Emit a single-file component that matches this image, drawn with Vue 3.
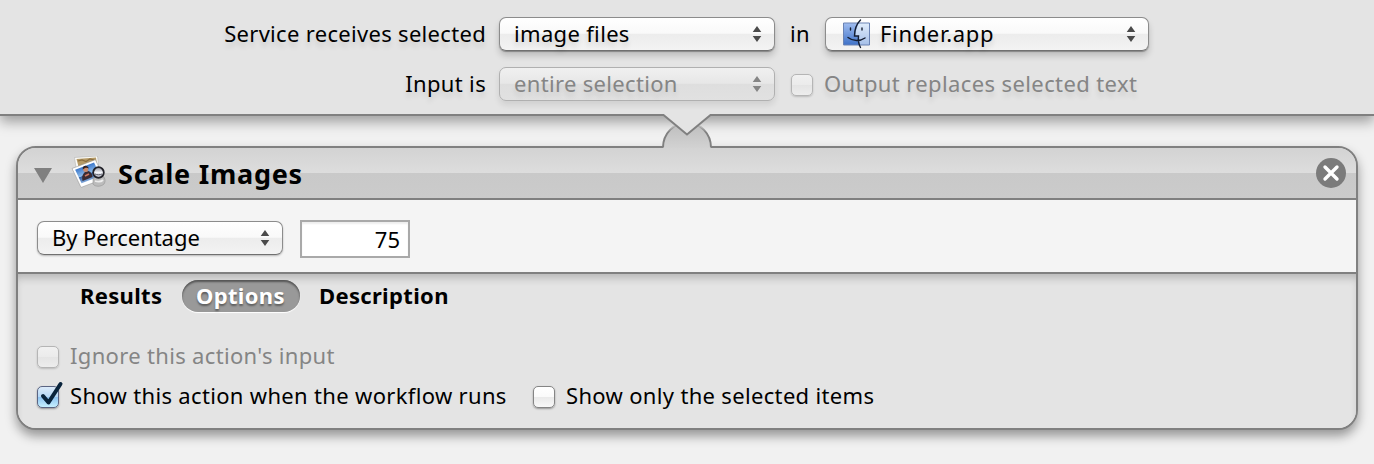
<script setup>
import { ref } from 'vue'

const tabs = ['Results', 'Options', 'Description']
const activeTab = ref('Options')
</script>

<template>
  <main class="workflow">
    <section class="service">
      <div class="row">
        <span class="label t-service">Service receives selected</span>
        <button class="popup wide shaded">
          <span class="t-image">image files</span>
          <svg class="arrows" viewBox="0 0 10 16"><path d="M5 0 9.3 6H.7zM.7 10h8.6L5 16z" /></svg>
        </button>
        <span class="in">in</span>
        <button class="popup finder shaded">
          <svg class="face" viewBox="0 0 28 30">
            <defs>
              <linearGradient id="faceLeft" x1="0" y1="0" x2="0" y2="1">
                <stop offset="0" stop-color="#a0bdf0" /><stop offset="1" stop-color="#3f72c8" />
              </linearGradient>
              <linearGradient id="faceRight" x1="0" y1="0" x2="0" y2="1">
                <stop offset="0" stop-color="#e0edfc" /><stop offset="1" stop-color="#a5bfe8" />
              </linearGradient>
            </defs>
            <rect x=".5" y="4" width="26" height="22" fill="url(#faceRight)" />
            <path d="M.5 4h15.500c-2 4-3.500 8-4 13h4l.5 9H.5z" fill="url(#faceLeft)" />
            <path d="M.5 4h26v22H.5z" fill="none" stroke="#6a83b4" stroke-width="1" />
            <path d="M17.500 1C13.500 5 11.500 11 11.500 17h4c-.5 4 0 8 2 11.500M5 18.500c5 4 12 4 17 .5M7.500 9v2M19 9v2" fill="none" stroke="#141d30" stroke-width="1.400" stroke-linecap="round" />
          </svg>
          <span class="t-finder">Finder.app</span>
          <svg class="arrows" viewBox="0 0 10 16"><path d="M5 0 9.3 6H.7zM.7 10h8.6L5 16z" /></svg>
        </button>
      </div>
      <div class="row second">
        <span class="label t-input">Input is</span>
        <button class="popup wide dim">
          <span class="t-entire">entire selection</span>
          <svg class="arrows" viewBox="0 0 10 16"><path d="M5 0 9.3 6H.7zM.7 10h8.6L5 16z" /></svg>
        </button>
        <i class="box off output-box"></i>
        <span class="muted t-output">Output replaces selected text</span>
      </div>
    </section>

    <div class="connector">
      <svg viewBox="0 0 60 36">
        <defs>
          <linearGradient id="socket" x1="0" y1="0" x2="0" y2="1">
            <stop offset="0" stop-color="#bdbdbd" /><stop offset="1" stop-color="#d2d2d2" />
          </linearGradient>
          <linearGradient id="rim" gradientUnits="userSpaceOnUse" x1="0" y1="9" x2="0" y2="34">
            <stop offset="0.05" stop-color="#808080" stop-opacity="0" /><stop offset=".4" stop-color="#808080" />
          </linearGradient>
        </defs>
        <path d="M6 35v-1a24 24 0 0 1 48 0v1z" fill="url(#socket)" />
        <path d="M6 34.500a24 25 0 0 1 48 0" fill="none" stroke="url(#rim)" stroke-width="2" />
        <path d="M6 0v2l24 20L54 2V0z" fill="#e4e4e4" />
        <path d="M5 2h1.500L30 21.500 53.500 2H55" fill="none" stroke="#808080" stroke-width="2" />
      </svg>
    </div>

    <section class="action">
      <header class="head">
        <svg class="disclosure" viewBox="0 0 18 16"><path d="M0 0h18L9 15z" /></svg>
        <svg class="photos" viewBox="0 0 36 34">
          <defs>
            <linearGradient id="sky" x1="0" y1="0" x2="0" y2="1">
              <stop offset="0" stop-color="#3c78cb" /><stop offset=".55" stop-color="#8dbbea" /><stop offset=".6" stop-color="#315fa3" /><stop offset="1" stop-color="#7ea6da" />
            </linearGradient>
            <linearGradient id="lens" x1="0" y1="0" x2="0" y2="1">
              <stop offset="0" stop-color="#8a8c96" /><stop offset=".5" stop-color="#f4f5fa" /><stop offset="1" stop-color="#a3a5b2" />
            </linearGradient>
          </defs>
          <path d="M3.500 1.500 26.500 0l2 17-22 4z" fill="#fbfbf8" stroke="#aaa" stroke-width=".5" />
          <path d="m5.500 3 19.500-1.500 1 8-18 3z" fill="#b59a66" />
          <path d="m7 5 4-1 4 1.500 4-2.500 4 1" fill="none" stroke="#8a6e40" stroke-width="1.200" />
          <g transform="matrix(.9 -.34 .41 .86 1 12.500)">
            <path d="M0 0h26v22H0z" fill="#fff" stroke="#8d8d8d" stroke-width=".5" />
            <path d="M2.400 2.400h21v15.600h-21z" fill="url(#sky)" />
          </g>
          <path d="M11.500 25c-1-4 0-7 2.500-9l3.500-1c3 1 4 4 4 6z" fill="#3a2c33" />
          <circle cx="14.700" cy="13.500" r="2.500" fill="#c98a6c" />
          <path d="M11.800 13.500c-1-4.500 5-5 6-1-2-1.200-4-.7-6 1z" fill="#2f1f20" />
          <path d="m14 20 4-2" stroke="#cf7862" stroke-width="1.800" />
          <path d="m22 22 9-2c3 1 4 5 2 8-3 3-9 3-11 0z" fill="#bcbcbc" stroke="#8a8a8a" stroke-width=".5" />
          <path d="M24 25c3 1 6 1 8-1" fill="none" stroke="#ededed" stroke-width="1.800" />
          <circle cx="27.500" cy="16.500" r="5.300" fill="url(#lens)" stroke="#222229" stroke-width="1.800" />
          <path d="M24 18c2 1 5 1 7 0" fill="none" stroke="#60626e" stroke-width="1" />
        </svg>
        <h1>Scale Images</h1>
        <svg class="close" viewBox="0 0 30 30">
          <circle cx="15" cy="15" r="15" fill="#7b7b7b" />
          <path d="m9 9 12 12M21 9 9 21" stroke="#fff" stroke-width="3.400" stroke-linecap="round" />
        </svg>
      </header>

      <div class="settings">
        <button class="popup method">
          <span class="t-method">By Percentage</span>
          <svg class="arrows" viewBox="0 0 10 16"><path d="M5 0 9.3 6H.7zM.7 10h8.6L5 16z" /></svg>
        </button>
        <div class="number">75</div>
      </div>

      <div class="details">
        <nav class="tabs">
          <span v-for="tab in tabs" :key="tab" class="tab" :class="[tab.toLowerCase(), { active: tab === activeTab }]" @click="activeTab = tab">{{ tab }}</span>
        </nav>
        <div class="check ignore">
          <i class="box off"></i><span class="muted t-ignore">Ignore this action's input</span>
        </div>
        <div class="check show">
          <i class="box on">
            <svg viewBox="0 0 28 30"><path d="m6 16 5.500 6.500L23.500 4" fill="none" stroke="#09243c" stroke-width="4" stroke-linecap="round" stroke-linejoin="round" /></svg>
          </i>
          <span class="t-show">Show this action when the workflow runs</span>
          <i class="box"></i>
          <span class="t-only">Show only the selected items</span>
        </div>
      </div>
    </section>
  </main>
</template>

<style>
body { margin: 0; background: #f1f1f1; }
</style>

<style scoped>
* { box-sizing: border-box; }
.workflow {
  height: 464px;
  overflow: hidden;
  background: #f1f1f1;
  color: #000;
  font: 22px/32px "Noto Sans", "Open Sans", sans-serif;
  letter-spacing: .33px;
  white-space: nowrap;
}
.service {
  height: 116px;
  padding-top: 17px;
  background: #e4e4e4;
  border-bottom: 2px solid #808080;
  box-shadow: 0 6px 12px rgba(0, 0, 0, .34);
}
.row { display: flex; height: 34px; }
.second { margin-top: 16px; }
.label { width: 486px; margin-right: 13px; text-align: right; }
.row > span { text-shadow: 0 5px 5px rgba(0, 0, 0, .1); }
.popup {
  display: flex;
  align-items: center;
  height: 34px;
  padding: 0 12px 0 14px;
  border: 1px solid #8c8c8c;
  border-bottom-color: #707070;
  border-radius: 7px;
  color: #000;
  background: linear-gradient(#fff 0, #f9f9f9 48%, #ececec 50%, #f3f3f3 100%);
  box-shadow: 0 1px 2px rgba(0, 0, 0, .25);
  font: inherit;
  letter-spacing: inherit;
  text-align: left;
}
.shaded { box-shadow: 0 1px 1px rgba(0, 0, 0, .3), 0 5px 6px rgba(0, 0, 0, .17); text-shadow: 0 5px 5px rgba(0, 0, 0, .13); }
.popup span { flex: 1; height: 32px; line-height: 30px; }
.wide { width: 276px; }
.arrows { width: 10px; height: 16px; fill: #4a4a4a; }
.in { width: 50px; padding-left: 15px; }
.finder { width: 324px; padding-left: 17px; }
.face { width: 28px; height: 30px; margin-right: 9px; }
.dim {
  color: #858585;
  border-color: #b0b0b0;
  background: linear-gradient(#f0f0f0, #e7e7e7 48%, #dedede 50%, #e1e1e1);
  box-shadow: 0 4px 6px rgba(0, 0, 0, .09);
  text-shadow: 0 5px 5px rgba(0, 0, 0, .09);
}
.dim .arrows { fill: #858585; }
.muted { color: #858585; }
.box {
  position: relative;
  flex: none;
  width: 22px;
  height: 22px;
  border: 1px solid #858585;
  border-radius: 5px;
  background: linear-gradient(#fff, #fafafa 48%, #e9e9e9 50%, #f8f8f8);
  box-shadow: 0 1px 2px rgba(0, 0, 0, .35);
}
.off { border-color: #b5b5b5; background: linear-gradient(#f1f1f1, #ebebeb 48%, #e4e4e4 50%, #ededed); box-shadow: 0 1px 2px rgba(0, 0, 0, .18); }
.on { border-color: #5b6583; background: linear-gradient(#dcebfa, #b6d8f6 48%, #8dc2f0 50%, #c5f0ff); }
.on svg { position: absolute; left: -1px; top: -7px; width: 28px; height: 30px; }
.output-box { margin: 7px 11px 0 16px; }

.connector { position: relative; height: 30px; }
.connector svg { position: absolute; z-index: 1; left: 657px; top: -3px; width: 60px; height: 36px; }

.action {
  width: 1342px;
  height: 284px;
  margin-left: 16px;
  overflow: hidden;
  border: 2px solid #808080;
  border-radius: 20px;
  background: #e4e4e4;
  box-shadow: 0 6px 11px rgba(0, 0, 0, .38);
}
.head {
  display: flex;
  align-items: center;
  height: 52px;
  padding: 0 10px 0 16px;
  border-bottom: 2px solid #808080;
  background: linear-gradient(#d3d3d3 0, #dddddd 50%, #c9c9c9 50%, #cbcbcb 100%);
}
.disclosure { width: 18px; height: 16px; margin-top: 5px; fill: #808080; }
.photos { width: 36px; height: 34px; margin: 0 11px 0 19px; }
h1 { flex: 1; margin: 2px 0 0; font-size: 27px; line-height: 34px; font-weight: 700; letter-spacing: .75px; }
.close { width: 30px; height: 30px; }
.settings {
  display: flex;
  gap: 17px;
  height: 74px;
  padding: 20px 0 0 19px;
  border-bottom: 2px solid #808080;
  background: #f4f4f4;
}
.method { width: 246px; margin-top: 1px; }
.number {
  width: 110px;
  height: 38px;
  padding-right: 8px;
  border: 2px solid #a9a9a9;
  background: #fff;
  box-shadow: inset 0 2px 2px #eee;
  line-height: 35px;
  letter-spacing: 0;
  text-align: right;
}
.details { height: 154px; padding: 6px 0 0 19px; background: #e4e4e4; box-shadow: inset 0 7px 8px -3px rgba(0, 0, 0, .2); }
.tabs { display: flex; height: 32px; font-weight: 700; line-height: 31px; }
.tab { cursor: default; }
.results { width: 102px; margin-left: 43px; }
.options { width: 118px; margin-right: 19px; padding-left: 14px; border-radius: 16px; }
.active { color: #fff; background: #999; box-shadow: inset 0 2px 2px #555, 0 1px 1px #fff; text-shadow: 0 2px 2px rgba(0, 0, 0, .4); }
.check { display: flex; align-items: center; height: 34px; }
.check span { margin-top: -5px; }
.check .box { margin-right: 11px; }
.ignore { margin-top: 28px; }
.show { margin-top: 6px; }
.t-show { width: 463px; }
.t-service { letter-spacing: .31px; }
.t-finder { letter-spacing: .66px; }
.t-output { letter-spacing: .39px; }
.t-method { letter-spacing: -.05px; }
</style>
